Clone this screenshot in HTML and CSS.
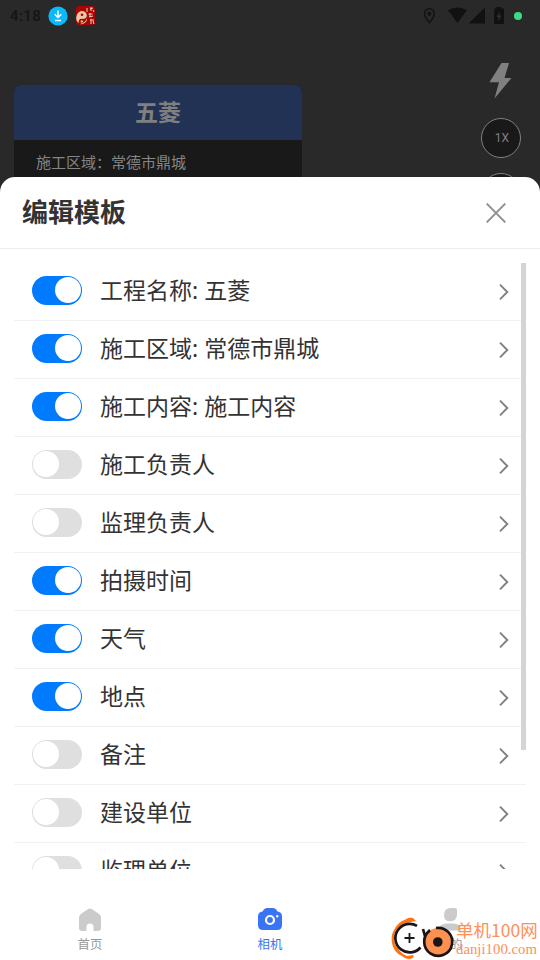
FILE: index.html
```
<!DOCTYPE html>
<html lang="zh-CN">
<head>
<meta charset="utf-8">
<title>编辑模板</title>
<link rel="stylesheet" href="styles.css">
</head>
<body>
<div class="screen">
  <div class="camera">
    <header class="status">
      <span class="clock">4:18</span>
      <svg class="download" width="20" height="20" viewBox="0 0 20 20"><circle cx="10" cy="10" r="9.600" fill="#08b9fb"/><path d="M10 4.500v7M6.700 8.200L10 11.500l3.300-3.300M7 14.500h6" fill="none" stroke="#fff" stroke-width="1.500"/></svg>
      <svg class="taiji" width="19" height="19" viewBox="0 0 19 19"><rect width="19" height="19" rx="3" fill="#a80507"/><path d="M.5 10C2 4 8 4 10 7c2 3 0 6-3 6-3-1-5 1-4 4C0 15 0 13 .5 10z" fill="#e8caa4"/><path d="M11 9c1 5-3 8-7 9 3 1 7-2 7-5z" fill="#e8caa4"/><circle cx="6" cy="8.800" r="1.300" fill="#a80507"/><circle cx="5.800" cy="15.400" r="1.200" fill="#e8caa4"/><path d="M11 2v4M14 3l3-1M15 1v4M17 4l1 2M12.500 8h4M14 7v4M13 11l4-1M14 14h4M15 13v5M17 15l1 3" stroke="#f0d0b4" fill="none"/></svg>
      <span class="fill"></span>
      <svg class="system" width="100" height="20" viewBox="0 0 100 20">
        <path d="M9.400 2.800c-3 0-4.900 2.200-4.900 4.900 0 3.200 4.900 9 4.900 9s4.900-5.800 4.900-9c0-2.700-1.900-4.900-4.900-4.900z" fill="none" stroke="#121212" stroke-width="1.500"/><circle cx="9.400" cy="7.800" r="2" fill="#121212"/>
        <path d="M28 4.200Q37.500-1 47 4.200L37.500 17zM65 1.500V17.500H48.500z" fill="#111"/>
        <path d="M74.300 2.500h2.200V1h4.500v1.500h3V18H74z" fill="#111"/><path d="M79.800 5.500L76.500 11h2l-.3 4 3.300-5.600h-2z" fill="#303030"/>
      </svg>
      <span class="privacy"></span>
    </header>
    <div class="preview">
      <section class="stamp">
        <h2>五菱</h2>
        <p>施工区域：常德市鼎城</p>
      </section>
      <div class="tools">
        <svg class="flash" width="24" height="37" viewBox="0 0 24 37"><path d="M12.500 0h7.500l-4.500 15H22.500L5.500 35.500 10 19.300H.5z" fill="#808080"/></svg>
        <span class="round">1X</span>
        <span class="round second"></span>
      </div>
    </div>
  </div>
  <main class="sheet">
    <header class="heading">
      <h1>编辑模板</h1>
      <svg width="20" height="20" viewBox="0 0 20 20"><path d="M.7.500l18.600 19M19.300.500L.7 19.500" stroke="#929292" stroke-width="1.900"/></svg>
    </header>
    <div class="viewport">
      <ul class="rows">
        <li><i class="switch on"></i><span>工程名称: 五菱</span><svg class="chevron" viewBox="0 0 10 16"><path d="M1 .7L8.300 8 1 15.300"/></svg></li>
        <li><i class="switch on"></i><span>施工区域: 常德市鼎城</span><svg class="chevron" viewBox="0 0 10 16"><path d="M1 .7L8.300 8 1 15.300"/></svg></li>
        <li><i class="switch on"></i><span>施工内容: 施工内容</span><svg class="chevron" viewBox="0 0 10 16"><path d="M1 .7L8.300 8 1 15.300"/></svg></li>
        <li><i class="switch"></i><span>施工负责人</span><svg class="chevron" viewBox="0 0 10 16"><path d="M1 .7L8.300 8 1 15.300"/></svg></li>
        <li><i class="switch"></i><span>监理负责人</span><svg class="chevron" viewBox="0 0 10 16"><path d="M1 .7L8.300 8 1 15.300"/></svg></li>
        <li><i class="switch on"></i><span>拍摄时间</span><svg class="chevron" viewBox="0 0 10 16"><path d="M1 .7L8.300 8 1 15.300"/></svg></li>
        <li><i class="switch on"></i><span>天气</span><svg class="chevron" viewBox="0 0 10 16"><path d="M1 .7L8.300 8 1 15.300"/></svg></li>
        <li><i class="switch on"></i><span>地点</span><svg class="chevron" viewBox="0 0 10 16"><path d="M1 .7L8.300 8 1 15.300"/></svg></li>
        <li><i class="switch"></i><span>备注</span><svg class="chevron" viewBox="0 0 10 16"><path d="M1 .7L8.300 8 1 15.300"/></svg></li>
        <li><i class="switch"></i><span>建设单位</span><svg class="chevron" viewBox="0 0 10 16"><path d="M1 .7L8.300 8 1 15.300"/></svg></li>
        <li><i class="switch"></i><span>监理单位</span><svg class="chevron" viewBox="0 0 10 16"><path d="M1 .7L8.300 8 1 15.300"/></svg></li>
      </ul>
      <span class="scrollbar"></span>
    </div>
    <nav class="tabs">
      <a><svg width="24" height="24" viewBox="0 0 24 24"><path d="M10.200 1q1.800-1.200 3.600 0l7.200 5Q23 7.400 23 9.400V20q0 3-3 3h-4.500v-4q0-3.500-3.500-3.500T8.500 19v4H4q-3 0-3-3V9.400q0-2 2-3.400z" fill="#cbcbcb"/></svg><span>首页</span></a>
      <a class="active"><svg width="24" height="24" viewBox="0 0 24 24"><path d="M9 0h6q2 0 3.200 1.500L19.500 3.500q4.500.5 4.500 5V17q0 5-5 5H5q-5 0-5-5V8.500q0-4.500 4.500-5L5.800 1.500Q7 0 9 0z" fill="#3974f6"/><circle cx="12" cy="12" r="4" fill="none" stroke="#fff" stroke-width="2.200"/><circle cx="19.200" cy="8.300" r="1.200" fill="#fff"/></svg><span>相机</span></a>
      <a><svg width="24" height="24" viewBox="0 0 24 24"><path d="M13 0h4q2 0 2 2v4.300q0 7-7 7-6 0-6-6Q6 0 13 0zM1 22q0-6.500 8-6.500h6q8 0 8 6.500v.5H1z" fill="#cbcbcb"/></svg><span>我的</span></a>
    </nav>
  </main>
  <aside class="watermark">
    <svg width="66" height="44" viewBox="0 0 66 44">
      <path d="M12 4C17 3 16 0 23 1l3 3C12 5 3 17 8 31q3 6 9 8l6-1q2 3-3 4-5 0-8-3C2 35-1 21 4 13q3-6 8-9z" fill="#ff7310"/>
      <circle cx="19.500" cy="21" r="15.500" fill="#fff"/>
      <path d="M27 8.800A14.300 14.300 0 1 0 30.500 30.500M33 12l2 7q1 3 1 6M40 13q-7 6-5 14" fill="none" stroke="#1b1517" stroke-width="2.700"/>
      <circle cx="48" cy="25" r="14" fill="#ff9150"/>
      <path d="M46 11a14 14 0 1 1-6 2.500" fill="none" stroke="#1b1517" stroke-width="2.700"/>
      <circle cx="47.800" cy="25" r="4.800" fill="#1b1517"/>
      <path d="M14.500 21h10M19.500 16v10" stroke="#1b1517" stroke-width="1.800"/>
    </svg>
    <div class="brand"><b>单机100网</b><span>danji100.com</span></div>
  </aside>
</div>
</body>
</html>
```
FILE: styles.css
```
* { box-sizing: border-box; }
body { margin: 0; font-family: "Noto Sans", "Noto Sans CJK SC", sans-serif; color: #333; }
h1, h2, p, ul { margin: 0; padding: 0; }
svg { display: block; flex: none; }
.screen { position: relative; width: 540px; height: 960px; overflow: hidden; display: flex; flex-direction: column; background: #292929; }
.camera { height: 177px; flex: none; overflow: hidden; }
.status { height: 31px; padding: 0 18px 0 10px; display: flex; align-items: center; }
.clock { width: 38px; font: 500 15px/20px Roboto, sans-serif; letter-spacing: .4px; color: #141414; }
.taiji { margin-left: 8px; }
.fill { flex: 1; }
.system { margin-right: -6px; }
.privacy { width: 8px; height: 8px; border-radius: 50%; background: #3ddc84; }
.preview { display: flex; justify-content: space-between; padding: 32px 19px 0 14px; }
.stamp { width: 288px; height: 130px; margin-top: 22px; border-radius: 7px 7px 0 0; overflow: hidden; background: #191919; color: #858585; }
.stamp h2 { height: 55px; background: #223255; font: bold 23px/53px "Noto Sans CJK SC", sans-serif; text-align: center; color: #808080; }
.stamp p { padding-left: 22px; font: 15px/43px "Noto Sans CJK SC", sans-serif; }
.tools { width: 40px; display: flex; flex-direction: column; align-items: center; }
.round { width: 40px; height: 40px; flex: none; margin-top: 18px; padding-left: 2px; border: 1px solid #808080; border-radius: 50%; background: #191919; color: #808080; text-align: center; font: 12px/38px Roboto, sans-serif; }
.second { margin-top: 15px; }
.sheet { flex: 1; min-height: 0; background: #fff; border-radius: 15px 15px 0 0; }
.heading { height: 72px; border-bottom: 1px solid #ececec; padding: 0 34px 0 22px; display: flex; justify-content: space-between; align-items: center; }
.heading h1 { font: bold 26px/38px "Noto Sans CJK SC", sans-serif; margin-bottom: 4px; }
.viewport { display: flex; height: 606px; margin: 14px 14px 0; overflow: hidden; }
.rows { flex: 1; list-style: none; }
.rows li { height: 58px; margin-right: -5px; padding: 0 17px 3px 18px; border-bottom: 1px solid #f1f1f1; display: flex; align-items: center; }
.rows span { flex: 1; margin-left: 18px; font-size: 23px; line-height: 34px; }
.switch { width: 50px; height: 29px; border-radius: 15px; padding: 1px .6px; background: #dfdfdf; display: flex; }
.switch::after { content: ""; width: 26.5px; height: 26.5px; border-radius: 50%; background: #fff; }
.switch.on { background: #007aff; justify-content: flex-end; }
.chevron { width: 10px; height: 16px; margin: 3px .5px 0 -.5px; fill: none; stroke: #808080; stroke-width: 1.9; }
.scrollbar { position: relative; width: 5px; height: 487px; background: #d4d4d4; }
.tabs { height: 91px; padding-top: 39px; display: flex; }
.tabs a { flex: 1; display: flex; flex-direction: column; align-items: center; font: 12.4px/20px "Noto Sans CJK SC", sans-serif; color: #999; }
.tabs span { margin-top: 2px; }
.tabs .active { color: #3974f6; }
.watermark { position: absolute; left: 390px; top: 917px; display: flex; color: #ff9058; white-space: nowrap; }
.brand { display: flex; flex-direction: column; font-family: "Liberation Serif", "Noto Sans CJK SC", serif; }
.brand b { font-family: "Noto Sans CJK SC", sans-serif; font-weight: 400; font-size: 17.5px; line-height: 26px; height: 23px; }
.brand span { font-size: 14.8px; line-height: 18px; }
```
